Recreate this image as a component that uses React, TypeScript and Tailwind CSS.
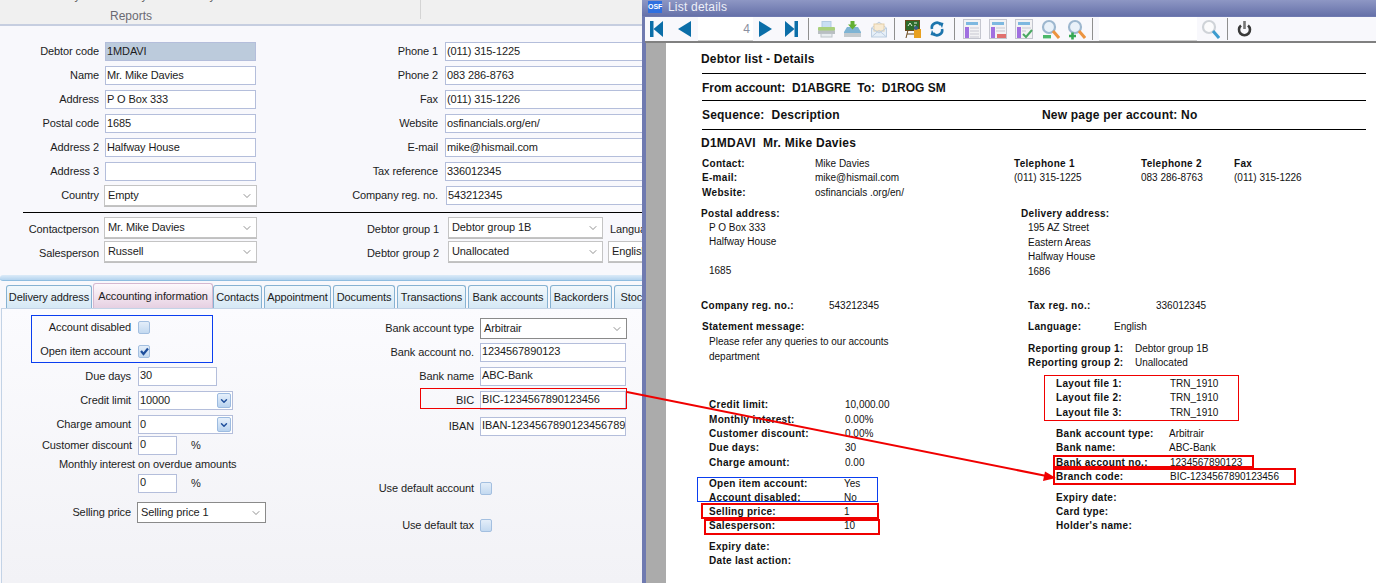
import React from "react";
import { ChevronDown } from "lucide-react";

const Lbl = ({ w, children, className = "" }: { w: string; children?: React.ReactNode; className?: string }) => (
  <div className={`${w} shrink-0 text-right whitespace-nowrap ${className}`}>{children}</div>
);

const Inp = ({ w, children, bg = "bg-white", lh = "leading-[16px]", className = "" }: { w: string; children?: React.ReactNode; bg?: string; lh?: string; className?: string }) => (
  <div className={`${w} ${bg} ${lh} h-[19px] shrink-0 border border-[#b4bedb] pl-[1px] whitespace-nowrap overflow-hidden ${className}`}>{children}</div>
);

const Combo = ({ w, children, dark = false }: { w: string; children?: React.ReactNode; dark?: boolean }) => (
  <div className={`${w} h-[21px] shrink-0 bg-white border ${dark ? "border-[#8a8a8a]" : "border-[#c4c4c4] shadow-[0_1px_0_#c0c0c0]"} pl-[3px] flex items-center justify-between pr-[3px] whitespace-nowrap overflow-hidden`}>
    <span className={dark ? "-mt-px" : ""}>{children}</span>
    <ChevronDown size={12} strokeWidth={1.3} className="text-[#555] shrink-0" />
  </div>
);

const Check = ({ on = false }: { on?: boolean }) => (
  <div className="w-[12px] h-[13px] shrink-0 rounded-[2px] border border-[#a3bfe0] bg-gradient-to-b from-[#e4eef9] to-[#c3d9f0] flex items-center justify-center">
    {on && (
      <svg width="9" height="9" viewBox="0 0 9 9">
        <path d="M1 4 L3.5 7 L8 1.5" stroke="#1f4f9c" strokeWidth="2.2" fill="none" />
      </svg>
    )}
  </div>
);

const SpinCombo = ({ children }: { children: React.ReactNode }) => (
  <div className="w-[95px] h-[19px] shrink-0 bg-white border border-[#b4bedb] pl-[1px] flex items-center justify-between leading-[14px]">
    <span className="-mt-[2px]">{children}</span>
    <div className="w-[14px] h-[15px] mr-px rounded-[2px] border border-[#9dbbe0] bg-gradient-to-b from-[#e6f0fb] to-[#b9d3ef] flex items-center justify-center">
      <ChevronDown size={10} strokeWidth={3.5} className="text-[#1f4f9c]" />
    </div>
  </div>
);

const tabs: [string, string, string][] = [
  ["Delivery address", "w-[86px]", "ml-[6px]"],
  ["Accounting information", "w-[120px]", "ml-px"],
  ["Contacts", "w-[49px]", ""],
  ["Appointment", "w-[67px]", "ml-[2px]"],
  ["Documents", "w-[62px]", "ml-[2px]"],
  ["Transactions", "w-[69px]", "ml-[2px]"],
  ["Bank accounts", "w-[80px]", "ml-[2px]"],
  ["Backorders", "w-[62px]", "ml-[2px]"],
  ["Stock", "w-[40px]", "ml-[2px]"],
];

const Left = () => (
  <div className="w-[642px] shrink-0 h-full flex flex-col bg-[#f8f8fc] text-[11px] tracking-[-0.1px] text-[#1c1c1c] overflow-hidden">
    <div className="h-[26px] shrink-0 bg-[#f0f0f0] border-b-2 border-[#c6cee0] overflow-hidden">
      <div className="flex -mt-[10px] text-[#555] leading-[13px] h-[13px] whitespace-nowrap">
        <div className="w-[17px] shrink-0 flex justify-end">Statements</div>
        <span className="ml-[36px] w-[67px] shrink-0">Analyser 1</span>
        <span className="w-[68px] shrink-0">Analyser 2</span>
        <span>Analysis</span>
      </div>
      <div className="flex">
        <div className="w-[420px] text-center pr-[158px] pt-[6px] text-[12px] tracking-normal leading-[14px] text-[#6a6a72]">Reports</div>
        <div className="w-px h-[19px] bg-[#d4d4d4] -mt-[3px]" />
      </div>
    </div>

    <div className="pt-[16px] flex flex-col">
      {[
        ["Debtor code", "1MDAVI", "Phone 1", "(011) 315-1225"],
        ["Name", "Mr. Mike Davies", "Phone 2", "083 286-8763"],
        ["Address", "P O Box 333", "Fax", "(011) 315-1226"],
        ["Postal code", "1685", "Website", "osfinancials.org/en/"],
        ["Address 2", "Halfway House", "E-mail", "mike@hismail.com"],
        ["Address 3", "", "Tax reference", "336012345"],
      ].map(([a, b, c, d], i) => (
        <div key={a} className="flex items-center h-[19px] mb-[5px]">
          <Lbl w="w-[99px]">{a}</Lbl>
          <Inp w="w-[151px]" className="ml-[6px]" bg={i === 0 ? "bg-[#bccbdc]" : "bg-white"}>{b}</Inp>
          <Lbl w="w-[182px]">{c}</Lbl>
          <Inp w="w-[200px]" className="ml-[7px]">{d}</Inp>
        </div>
      ))}
      <div className="flex items-center h-[19px]">
        <Lbl w="w-[99px]">Country</Lbl>
        <div className="ml-[5px]"><Combo w="w-[153px]">Empty</Combo></div>
        <Lbl w="w-[181px]">Company reg. no.</Lbl>
        <Inp w="w-[200px]" className="ml-[8px]">543212345</Inp>
      </div>
    </div>

    <div className="ml-[23px] h-px bg-black mt-[7px] shrink-0" />

    <div className="flex items-center h-[21px] mt-[4px]">
      <Lbl w="w-[99px]" className="mt-[3px]">Contactperson</Lbl>
      <div className="ml-[5px]"><Combo w="w-[153px]">Mr. Mike Davies</Combo></div>
      <Lbl w="w-[182px]" className="mt-[3px]">Debtor group 1</Lbl>
      <div className="ml-[9px]"><Combo w="w-[155px]">Debtor group 1B</Combo></div>
      <span className="ml-[7px] mt-[3px] whitespace-nowrap">Language</span>
    </div>
    <div className="flex items-center h-[21px] mt-[3px]">
      <Lbl w="w-[99px]" className="mt-[3px]">Salesperson</Lbl>
      <div className="ml-[5px]"><Combo w="w-[153px]">Russell</Combo></div>
      <Lbl w="w-[182px]" className="mt-[3px]">Debtor group 2</Lbl>
      <div className="ml-[9px]"><Combo w="w-[155px]">Unallocated</Combo></div>
      <div className="ml-[5px]"><Combo w="w-[80px]">English</Combo></div>
    </div>

    <div className="h-[6px] mt-[13px] shrink-0 rounded-l-[3px] border-b border-[#8fbde0] bg-gradient-to-b from-[#dcebf8] to-[#b4d4ef]" />

    <div className="flex items-end h-[26px] shrink-0 mt-px whitespace-nowrap">
      {tabs.map(([t, w, m]) =>
        t === "Accounting information" ? (
          <div key={t} className={`${w} ${m} shrink-0 h-[25px] rounded-t-[3px] border border-b-0 border-[#d5b8d0] bg-gradient-to-b from-[#fdf9fc] to-[#e6d0e2] text-center leading-[24px]`}>{t}</div>
        ) : (
          <div key={t} className={`${w} ${m} shrink-0 h-[23px] rounded-t-[3px] border border-b-0 border-[#86b2d2] bg-gradient-to-b from-[#f2f8fc] to-[#d5e8f5] text-center leading-[23px]`}>{t}</div>
        )
      )}
    </div>

    <div className="flex-1 flex border-t border-l border-[#c3d3e6] ml-[1px] bg-gradient-to-b from-[#fbfbfe] to-[#f2f2f6]">
      <div className="w-[278px] shrink-0 pt-[9px] flex flex-col">
        <div className="flex items-center h-[19px]"><Lbl w="w-[129px]">Account disabled</Lbl><div className="ml-[7px]"><Check /></div></div>
        <div className="flex items-center h-[19px] mt-[5px]"><Lbl w="w-[129px]">Open item account</Lbl><div className="ml-[7px]"><Check on /></div></div>
        <div className="flex items-center h-[19px] mt-[6px]"><Lbl w="w-[129px]">Due days</Lbl><Inp w="w-[79px]" lh="leading-[14px]" className="ml-[7px]">30</Inp></div>
        <div className="flex items-center h-[19px] mt-[5px]"><Lbl w="w-[129px]">Credit limit</Lbl><div className="ml-[7px]"><SpinCombo>10000</SpinCombo></div></div>
        <div className="flex items-center h-[19px] mt-[5px]"><Lbl w="w-[129px]">Charge amount</Lbl><div className="ml-[7px]"><SpinCombo>0</SpinCombo></div></div>
        <div className="flex items-center h-[19px] mt-[2px]"><Lbl w="w-[130px]">Customer discount</Lbl><Inp w="w-[39px]" lh="leading-[14px]" className="ml-[6px]">0</Inp><span className="ml-[14px]">%</span></div>
        <div className="h-[14px] mt-[2px] pl-[57px] leading-[14px] whitespace-nowrap">Monthly interest on overdue amounts</div>
        <div className="flex items-center h-[19px] mt-[3px]"><div className="w-[136px] shrink-0" /><Inp w="w-[39px]" lh="leading-[14px]">0</Inp><span className="ml-[14px]">%</span></div>
        <div className="flex items-center h-[21px] mt-[9px]"><Lbl w="w-[129px]">Selling price</Lbl><div className="ml-[6px]"><Combo w="w-[129px]" dark>Selling price 1</Combo></div></div>
      </div>
      <div className="flex-1 pt-[9px] flex flex-col">
        <div className="flex items-center h-[21px]"><Lbl w="w-[194px]">Bank account type</Lbl><div className="ml-[6px]"><Combo w="w-[147px]" dark>Arbitrair</Combo></div></div>
        <div className="flex items-center h-[19px] mt-[4px]"><Lbl w="w-[194px]">Bank account no.</Lbl><Inp w="w-[146px]" lh="leading-[15px]" className="ml-[6px]">1234567890123</Inp></div>
        <div className="flex items-center h-[19px] mt-[5px]"><Lbl w="w-[194px]">Bank name</Lbl><Inp w="w-[146px]" lh="leading-[15px]" className="ml-[6px]">ABC-Bank</Inp></div>
        <div className="flex items-center h-[19px] mt-[5px]"><Lbl w="w-[194px]">BIC</Lbl><Inp w="w-[146px]" lh="leading-[15px]" className="ml-[6px]">BIC-1234567890123456</Inp></div>
        <div className="flex items-center h-[19px] mt-[7px]"><Lbl w="w-[194px]">IBAN</Lbl><Inp w="w-[146px]" lh="leading-[15px]" className="ml-[6px]">IBAN-1234567890123456789</Inp></div>
        <div className="flex items-center h-[19px] mt-[43px]"><Lbl w="w-[194px]">Use default account</Lbl><div className="ml-[6px]"><Check /></div></div>
        <div className="flex items-center h-[19px] mt-[18px]"><Lbl w="w-[194px]">Use default tax</Lbl><div className="ml-[6px]"><Check /></div></div>
      </div>
    </div>
  </div>
);

const Sep = ({ className }: { className: string }) => <div className={`w-px h-[22px] bg-[#8f8f8f] shrink-0 ${className}`} />;

const Nav = ({ dir, bar, className }: { dir: "l" | "r"; bar: boolean; className: string }) => (
  <svg width="13" height="16" viewBox="0 0 13 16" className={`shrink-0 ${className}`}>
    {dir === "l" ? (
      <>
        {bar && <rect x="0" y="0" width="3.5" height="16" fill="#0b6ea8" />}
        <path d={bar ? "M3.5 8 L13 0 V16 Z" : "M0 8 L13 0 V16 Z"} fill="#0b6ea8" />
      </>
    ) : (
      <>
        {bar && <rect x="9.5" y="0" width="3.5" height="16" fill="#0b6ea8" />}
        <path d={bar ? "M0 0 L9.5 8 L0 16 Z" : "M0 0 L13 8 L0 16 Z"} fill="#0b6ea8" />
      </>
    )}
  </svg>
);

const TableIcon = ({ kind, className }: { kind: 0 | 1 | 2; className: string }) => (
  <svg width="18" height="20" viewBox="0 0 18 20" className={`shrink-0 ${className}`}>
    <rect x="0.5" y="0.5" width="17" height="19" fill="#f2f2f4" stroke="#c4c6cf" />
    <rect x="3" y="3" width="12" height="3" fill="#7db8e0" />
    <rect x="2" y="8" width="4" height="11" fill="#a06fe0" />
    {kind === 0 && <path d="M7 9h9M7 12h9M7 15h9M7 18h9" stroke="#d6d6dd" strokeWidth="1.5" />}
    {kind === 1 && (
      <>
        <path d="M7 9h9M7 12h9" stroke="#d6d6dd" strokeWidth="1.5" />
        <rect x="8" y="15" width="9" height="4" fill="#e0706f" />
      </>
    )}
    {kind === 2 && (
      <>
        <path d="M7 9h9M7 12h4" stroke="#d6d6dd" strokeWidth="1.5" />
        <path d="M8 15 L11 18 L17 11" stroke="#4aa862" strokeWidth="2" fill="none" />
      </>
    )}
  </svg>
);

const ZoomIcon = ({ sign, className, faint = false }: { sign?: "-" | "+"; className: string; faint?: boolean }) => (
  <svg width="19" height="21" viewBox="0 0 19 21" className={`shrink-0 ${className}`}>
    <circle cx="8" cy="8" r="6" fill={faint ? "#fbfbfc" : "#e9f1f9"} stroke={faint ? "#cfd3d8" : "#9db7cf"} strokeWidth="2.2" />
    <path d="M12 12 L18 19" stroke={sign ? "#ec9440" : "#3d9ccf"} strokeWidth="3" />
    {sign === "-" && <rect x="2" y="16" width="8" height="3.4" fill="#4cb86a" />}
    {sign === "+" && <path d="M5.5 13.5v7M2 17h7" stroke="#35a853" strokeWidth="2.6" />}
  </svg>
);

const Toolbar = () => (
  <div className="h-[24px] ml-[3px] mt-px bg-[#f8f8fc] flex items-center shrink-0">
    <Nav dir="l" bar className="ml-[5px]" />
    <Nav dir="l" bar={false} className="ml-[15px]" />
    <div className="ml-[7px] w-[55px] h-[24px] shrink-0 bg-white text-right pr-[3px] text-[12px] leading-[24px] text-[#8a8fa0] border-b border-[#d0d0d0]">4</div>
    <Nav dir="r" bar={false} className="ml-[6px]" />
    <Nav dir="r" bar className="ml-[13px]" />
    <Sep className="ml-[10px]" />
    <svg width="17" height="17" viewBox="0 0 17 17" className="ml-[9px] shrink-0">
      <rect x="4" y="0.5" width="9" height="6" fill="#c9dff3" stroke="#b3cbe2" />
      <rect x="0" y="6" width="17" height="4" rx="1" fill="#a9d07c" />
      <rect x="0" y="9.5" width="17" height="3.5" fill="#b9bfc2" />
      <rect x="3" y="12.5" width="11" height="3.5" fill="#e8edf0" stroke="#bcc3c8" />
    </svg>
    <svg width="17" height="17" viewBox="0 0 17 17" className="ml-[9px] shrink-0">
      <path d="M3 6 L14 6 L17 11 V12 H0 V11 Z" fill="#7fb4d4" />
      <rect x="0" y="12" width="17" height="4" fill="#c4cace" />
      <path d="M6.5 0 H10.5 V3.5 H13 L8.5 8.5 L4 3.5 H6.5 Z" fill="#62b032" />
    </svg>
    <svg width="16" height="17" viewBox="0 0 16 17" className="ml-[10px] shrink-0">
      <path d="M0.5 7 L8 1 L15.5 7 V16 H0.5 Z" fill="#e6eff8" stroke="#bccde0" />
      <rect x="3" y="3" width="10" height="7" fill="#f8ebd4" stroke="#e5cfa8" />
      <path d="M0.5 16 L8 9.5 L15.5 16 M0.5 7 L8 12 L15.5 7" fill="none" stroke="#bccde0" />
    </svg>
    <Sep className="ml-[7px]" />
    <svg width="16" height="18" viewBox="0 0 16 18" className="ml-[10px] shrink-0">
      <rect x="0.5" y="0.5" width="14" height="10" fill="#2c6b2a" stroke="#6b4a1e" />
      <path d="M3 6 L5 3 L7 6 M9 3 h3 M9 6 h2" stroke="#e6f2e0" fill="none" />
      <path d="M3 10 L1 18 M10 10 L12 18 M2 14 h9" stroke="#6b4a1e" fill="none" />
      <rect x="9" y="9" width="7" height="9" fill="#e8a020" />
      <circle cx="11" cy="8" r="2" fill="#3a5a8c" />
    </svg>
    <svg width="14" height="16" viewBox="0 0 14 16" className="ml-[9px] shrink-0">
      <path d="M2 8 A5 5 0 0 1 11 4" fill="none" stroke="#1d75ad" strokeWidth="2.6" />
      <path d="M9 1 L13.5 2 L12 7 Z" fill="#1d75ad" />
      <path d="M12 8 A5 5 0 0 1 3 12" fill="none" stroke="#1d75ad" strokeWidth="2.6" />
      <path d="M5 15 L0.5 14 L2 9 Z" fill="#1d75ad" />
    </svg>
    <Sep className="ml-[10px]" />
    <TableIcon kind={0} className="ml-[8px]" />
    <TableIcon kind={1} className="ml-[8px]" />
    <TableIcon kind={2} className="ml-[8px]" />
    <ZoomIcon sign="-" className="ml-[8px]" />
    <ZoomIcon sign="+" className="ml-[7px]" />
    <Sep className="ml-[6px]" />
    <div className="ml-[6px] w-[98px] h-[24px] shrink-0 bg-white border-b border-[#d0d0d0]" />
    <ZoomIcon faint className="ml-[4px]" />
    <Sep className="ml-[7px]" />
    <svg width="15" height="16" viewBox="0 0 15 16" className="ml-[9px] shrink-0">
      <path d="M4 4.5 A5.5 5.5 0 1 0 11 4.5" fill="none" stroke="#3a3a3a" strokeWidth="2.6" />
      <rect x="6.2" y="0" width="2.6" height="8" fill="#777" />
    </svg>
  </div>
);

const B = ({ children, className = "" }: { children?: React.ReactNode; className?: string }) => (
  <span className={`font-bold tracking-[0.3px] whitespace-nowrap shrink-0 inline-block ${className}`}>{children}</span>
);
const Rr = ({ children, className = "" }: { children?: React.ReactNode; className?: string }) => (
  <div className={`flex items-center h-[14px] whitespace-nowrap ${className}`}>{children}</div>
);

const Report = () => (
  <div className="flex-1 bg-white pl-[35px] text-[10px] leading-[14px] text-[#111] overflow-hidden">
    <div className="h-[16px] mt-[8px] font-bold text-[12px] leading-[16px] tracking-[0.2px]">Debtor list - Details</div>
    <div className="h-px w-[664px] ml-px bg-black mt-[6px]" />
    <div className="h-[16px] mt-[6px] ml-px font-bold text-[12px] leading-[16px] whitespace-pre">From account:  D1ABGRE  To:  D1ROG SM</div>
    <div className="h-px w-[664px] ml-px bg-black mt-[4px]" />
    <div className="h-[16px] mt-[6px] ml-px flex font-bold text-[12px] leading-[16px] tracking-[0.2px] whitespace-pre">
      <span className="w-[340px]">Sequence:  Description</span>
      <span>New page per account: No</span>
    </div>
    <div className="h-px w-[664px] ml-px bg-black mt-[6px]" />
    <div className="h-[16px] mt-[5px] font-bold text-[12px] leading-[16px] tracking-[0.25px] whitespace-pre">D1MDAVI  Mr. Mike Davies</div>

    <div className="grid grid-cols-[113px_199px_127px_93px_80px] mt-[6px] ml-px">
      <B>Contact:</B><span>Mike  Davies</span><B>Telephone 1</B><B>Telephone 2</B><B>Fax</B>
      <B>E-mail:</B><span>mike@hismail.com</span><span>(011) 315-1225</span><span>083 286-8763</span><span>(011) 315-1226</span>
      <B className="mt-px">Website:</B><span className="mt-px">osfinancials .org/en/</span>
    </div>

    <div className="flex mt-[7px]">
      <div className="w-[320px] shrink-0 flex flex-col">
        <Rr><B>Postal address:</B></Rr>
        <Rr className="pl-[8px]">P O Box 333</Rr>
        <Rr className="pl-[8px]">Halfway House</Rr>
        <Rr className="pl-[8px] mt-[15px]">1685</Rr>
        <Rr className="mt-[21px]"><B className="w-[128px]">Company reg. no.:</B><span>543212345</span></Rr>
        <Rr className="mt-[7px] pl-px"><B>Statement message:</B></Rr>
        <Rr className="mt-px pl-[8px]">Please refer any queries  to our accounts</Rr>
        <Rr className="mt-px pl-[8px]">department</Rr>
        <Rr className="mt-[34px] pl-[8px]"><B className="w-[136px]">Credit limit:</B><span>10,000.00</span></Rr>
        <Rr className="mt-px pl-[8px]"><B className="w-[136px]">Monthly interest:</B><span>0.00%</span></Rr>
        <Rr className="pl-[8px]"><B className="w-[136px]">Customer discount:</B><span>0.00%</span></Rr>
        <Rr className="pl-[8px]"><B className="w-[136px]">Due days:</B><span>30</span></Rr>
        <Rr className="mt-px pl-[8px]"><B className="w-[136px]">Charge amount:</B><span>0.00</span></Rr>
        <Rr className="mt-[7px] pl-[8px]"><B className="w-[135px]">Open item account:</B><span>Yes</span></Rr>
        <Rr className="pl-[8px]"><B className="w-[135px]">Account disabled:</B><span>No</span></Rr>
        <Rr className="pl-[8px]"><B className="w-[135px]">Selling price:</B><span>1</span></Rr>
        <Rr className="pl-[8px]"><B className="w-[135px]">Salesperson:</B><span>10</span></Rr>
        <Rr className="mt-[7px] pl-[8px]"><B>Expiry date:</B></Rr>
        <Rr className="pl-[8px]"><B>Date last action:</B></Rr>
      </div>
      <div className="flex-1 flex flex-col">
        <Rr><B>Delivery address:</B></Rr>
        <Rr className="pl-[7px]">195 AZ Street</Rr>
        <Rr className="mt-px pl-[7px]">Eastern Areas</Rr>
        <Rr className="pl-[7px]">Halfway House</Rr>
        <Rr className="mt-px pl-[7px]">1686</Rr>
        <Rr className="mt-[20px] pl-[7px]"><B className="w-[128px]">Tax reg. no.:</B><span>336012345</span></Rr>
        <Rr className="mt-[7px] pl-[7px]"><B className="w-[86px]">Language:</B><span>English</span></Rr>
        <Rr className="mt-[8px] pl-[7px]"><B className="w-[107px]">Reporting group 1:</B><span>Debtor group 1B</span></Rr>
        <Rr className="pl-[7px]"><B className="w-[107px]">Reporting group 2:</B><span>Unallocated</span></Rr>
        <Rr className="mt-[7px] pl-[35px]"><B className="w-[114px]">Layout file 1:</B><span>TRN_1910</span></Rr>
        <Rr className="pl-[35px]"><B className="w-[114px]">Layout file 2:</B><span>TRN_1910</span></Rr>
        <Rr className="mt-px pl-[35px]"><B className="w-[114px]">Layout file 3:</B><span>TRN_1910</span></Rr>
        <Rr className="mt-[7px] pl-[35px]"><B className="w-[113px]">Bank account type:</B><span>Arbitrair</span></Rr>
        <Rr className="pl-[35px]"><B className="w-[113px]">Bank name:</B><span>ABC-Bank</span></Rr>
        <Rr className="mt-px pl-[35px]"><B className="w-[114px]">Bank account no.:</B><span>1234567890123</span></Rr>
        <Rr className="pl-[35px]"><B className="w-[114px]">Branch code:</B><span>BIC-1234567890123456</span></Rr>
        <Rr className="mt-[7px] pl-[35px]"><B>Expiry date:</B></Rr>
        <Rr className="pl-[35px]"><B>Card type:</B></Rr>
        <Rr className="pl-[35px]"><B>Holder's name:</B></Rr>
      </div>
    </div>
  </div>
);

const Right = () => (
  <div className="flex-1 h-full flex flex-col bg-[#6f7ab0] overflow-hidden">
    <div className="h-[16px] shrink-0 flex items-center bg-gradient-to-b from-[#8e97c4] to-[#6671a9]">
      <div className="ml-[6px] w-[14px] h-[12px] -mt-[3px] bg-[#2f6fe0] text-white text-[7px] leading-[12px] font-bold text-center">OSF</div>
      <span className="ml-[6px] -mt-[3px] text-[12px] text-[#eef0f8] tracking-[0.2px]">List details</span>
    </div>
    <Toolbar />
    <div className="h-[2px] ml-[3px] bg-[#808080] shrink-0" />
    <div className="flex-1 ml-[4px] flex bg-[#ababab] min-h-0">
      <div className="w-[20px] shrink-0" />
      <Report />
    </div>
  </div>
);

const Box = ({ c }: { c: string }) => <div className={`absolute ${c}`} />;

export default function App() {
  return (
    <div className="relative w-[1376px] h-[583px] overflow-hidden flex" style={{ fontFamily: '"Liberation Sans", Arial, sans-serif' }}>
      <Left />
      <Right />
      <Box c="border border-[#0a3ef0] left-[31px] top-[315px] w-[182px] h-[48px]" />
      <Box c="border border-[#f00000] left-[420px] top-[388px] w-[207px] h-[21px]" />
      <Box c="border border-[#f00000] left-[1044px] top-[375px] w-[195px] h-[46px]" />
      <Box c="border-2 border-[#f00000] left-[1053px] top-[455px] w-[201px] h-[13px]" />
      <Box c="border-2 border-[#f00000] left-[1053px] top-[468px] w-[243px] h-[17px]" />
      <Box c="border border-[#0a3ef0] left-[697px] top-[477px] w-[181px] h-[25px]" />
      <Box c="border-2 border-[#f00000] left-[701px] top-[503px] w-[178px] h-[16px]" />
      <Box c="border-2 border-[#f00000] left-[704px] top-[519px] w-[176px] h-[16px]" />
      <svg className="absolute left-0 top-0 pointer-events-none" width="1376" height="583">
        <path d="M627 392 L1049 476.5" stroke="#f00000" strokeWidth="2" />
        <path d="M1056 478 L1045 471.5 L1043 481 Z" fill="#f00000" />
      </svg>
    </div>
  );
}
